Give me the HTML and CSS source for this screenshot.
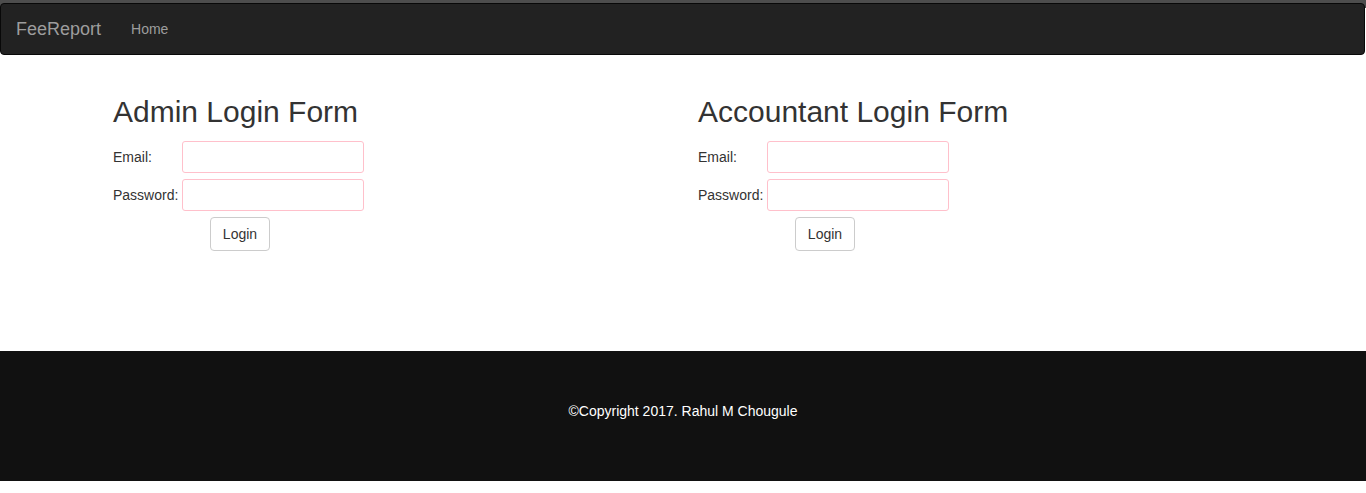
FILE: index.html
```html
<!DOCTYPE html>
<html lang="en">
<head>
<meta charset="utf-8">
<title>FeeReport</title>
<link rel="stylesheet" href="styles.css">
</head>
<body>
<header class="top">
  <nav class="navbar">
    <a class="brand" href="#">FeeReport</a>
    <a class="nav-link" href="#">Home</a>
  </nav>
</header>
<main class="container">
  <section class="col">
    <h2>Admin Login Form</h2>
    <form class="login">
      <label>Email:</label><input type="email">
      <label>Password:</label><input type="password">
      <div class="actions"><button type="button">Login</button></div>
    </form>
  </section>
  <section class="col">
    <h2>Accountant Login Form</h2>
    <form class="login">
      <label>Email:</label><input type="email">
      <label>Password:</label><input type="password">
      <div class="actions"><button type="button">Login</button></div>
    </form>
  </section>
</main>
<footer class="footer">©Copyright 2017. Rahul M Chougule</footer>
<div class="tail"></div>
</body>
</html>
```

FILE: styles.css
```css
* { box-sizing: border-box; }
html, body { margin: 0; padding: 0; }
body {
  font-family: "Liberation Sans", Arial, sans-serif;
  font-size: 14px;
  line-height: 1.42857;
  color: #333;
  background: #fff;
}
.top {
  background: linear-gradient(#4d4d4d 0, #4d4d4d 8px, #fff 8px);
  padding: 3px 1px 0 0;
}
.navbar {
  display: flex;
  align-items: center;
  height: 52px;
  background: #222;
  border: 1px solid #080808;
  border-radius: 4px;
}
.brand {
  padding: 15px;
  font-size: 18px;
  line-height: 20px;
  color: #9d9d9d;
  text-decoration: none;
}
.nav-link {
  padding: 15px;
  line-height: 20px;
  color: #9d9d9d;
  text-decoration: none;
}
.container {
  width: 1170px;
  margin: 20px auto 0;
  display: flex;
  min-height: 276px;
}
.col {
  width: 50%;
  padding: 0 15px;
}
h2 {
  font-size: 30px;
  font-weight: 500;
  line-height: 1.1;
  margin: 20px 0 13px;
  color: #333;
}
.login {
  display: grid;
  grid-template-columns: 69px 182px;
  row-gap: 6px;
  align-items: center;
  width: 251px;
}
.login label { line-height: 20px; }
.login input {
  height: 32px;
  width: 182px;
  border: 1px solid #ffc0cb;
  border-radius: 3px;
  padding: 0 6px;
  font: inherit;
  background: #fff;
}
.actions {
  grid-column: 1 / 3;
  display: flex;
  justify-content: center;
  padding-left: 3px;
}
.actions button {
  height: 34px;
  padding: 6px 12px;
  font: inherit;
  line-height: 20px;
  color: #333;
  background: #fff;
  border: 1px solid #ccc;
  border-radius: 4px;
}
.footer {
  background: #111;
  color: #fff;
  text-align: center;
  height: 130px;
  padding: 50px 0;
  line-height: 20px;
}
.tail { height: 12px; }
```
